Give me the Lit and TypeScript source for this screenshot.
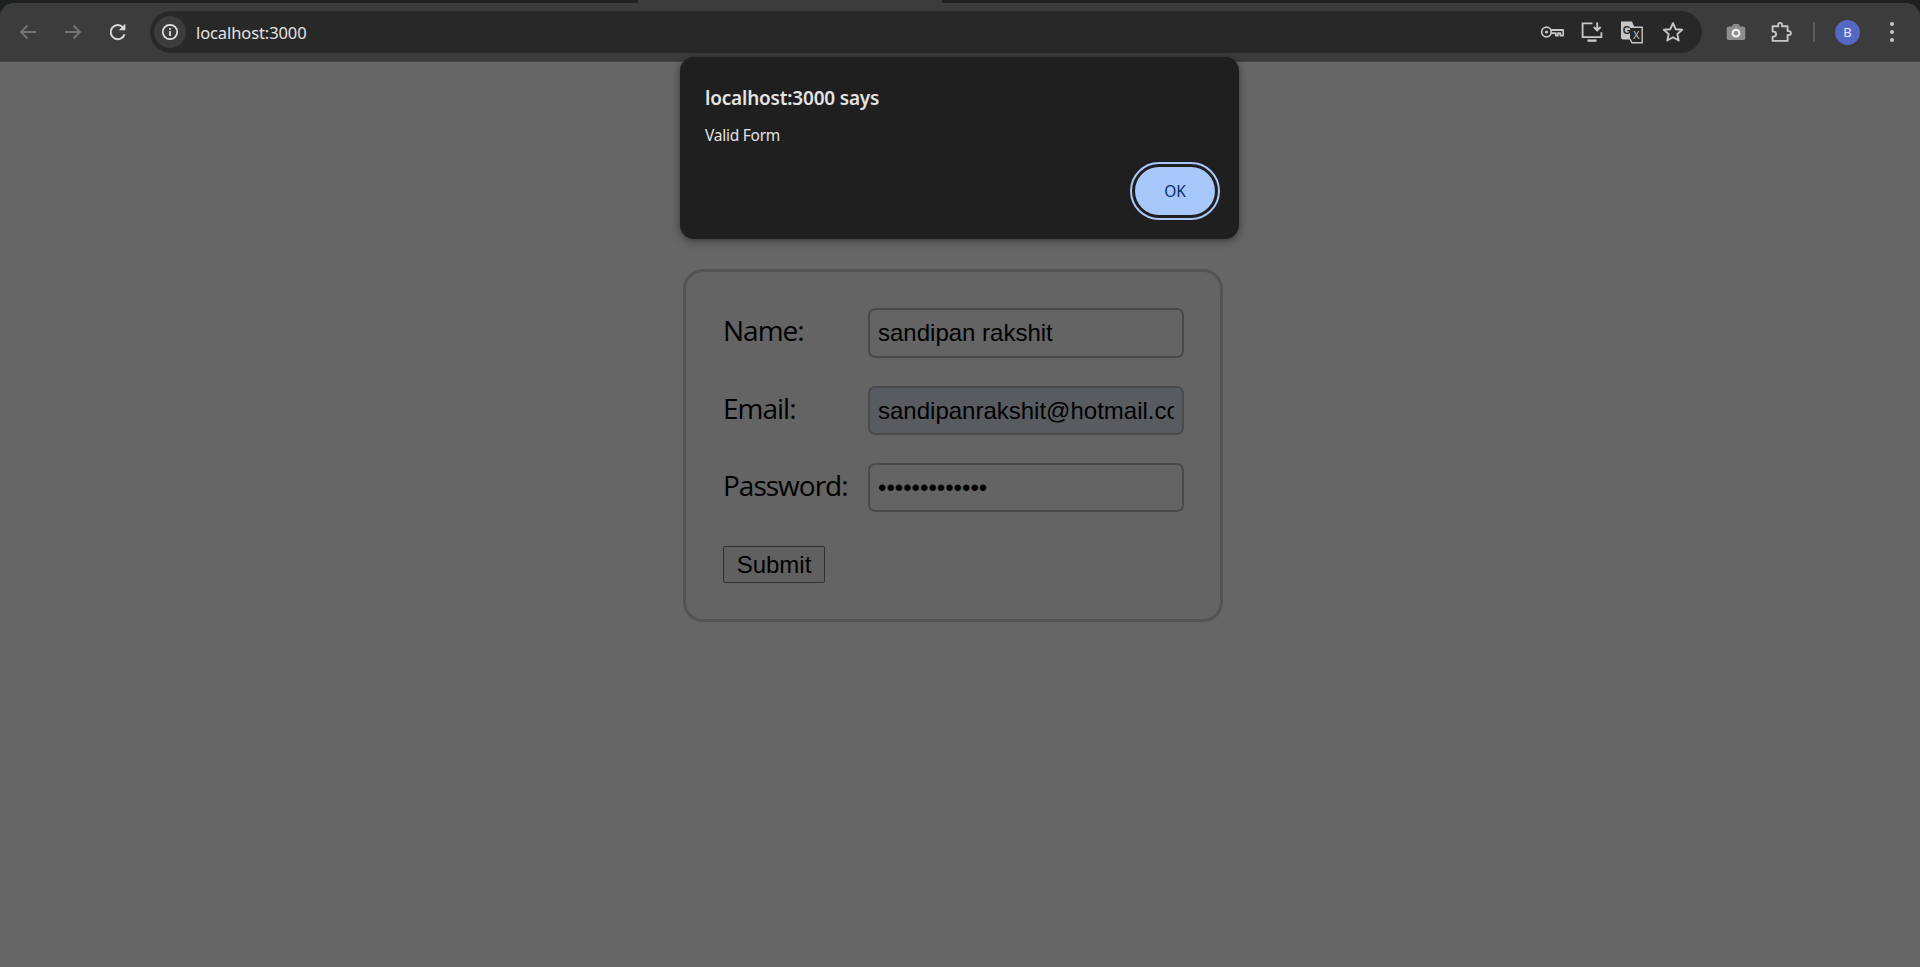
import { LitElement, html, css, svg } from 'lit'
import { customElement, state } from 'lit/decorators.js'

const arrowBack = svg`<path d="M20 12H5M11.5 5.5 5 12l6.5 6.5" fill="none" stroke="currentColor" stroke-width="1.8"/>`
const arrowForward = svg`<path d="M4 12h15M12.5 5.5 19 12l-6.5 6.5" fill="none" stroke="currentColor" stroke-width="1.8"/>`
const reload = svg`<path d="M18.6 14.2A7.1 7.1 0 1 1 17 7.3" fill="none" stroke="currentColor" stroke-width="1.9"/><path d="M19.4 3.6v6.6h-6.6z" fill="currentColor"/>`
const info = svg`<circle cx="12" cy="12" r="7.2" fill="none" stroke="currentColor" stroke-width="1.7"/><path d="M11.1 11h1.8v5h-1.8zM11.1 8h1.8v1.8h-1.8z" fill="currentColor"/>`
const key = svg`<circle cx="6.5" cy="12" r="4.8" fill="none" stroke="currentColor" stroke-width="1.8"/><circle cx="6.5" cy="12" r="1.6" fill="currentColor"/><path d="M11.2 10h12v5.6h-2.8v-2.4H18v2.4h-2.2v-2.4h-4.6" fill="none" stroke="currentColor" stroke-width="1.8" stroke-linejoin="round"/>`
const install = svg`<path d="M12.5 3.4H2.6v13.8h18.8v-5" fill="none" stroke="currentColor" stroke-width="1.8"/><path d="M7.5 20.6h9" stroke="currentColor" stroke-width="2.4"/><path d="M17.2 2.4v7.4M13.8 7l3.4 3.4L20.6 7" fill="none" stroke="currentColor" stroke-width="1.9"/>`
const translate = svg`<path d="M1 1.5h11l2.4 5.5v12.5H3a2 2 0 0 1-2-2z" fill="currentColor"/><path d="M10 7.2h12.2v15.6H12L10 19" fill="#282828" stroke="currentColor" stroke-width="1.4"/><text x="2.8" y="14.2" font-family="Liberation Sans, sans-serif" font-size="10.5" font-weight="700" fill="#282828">G</text><text x="13" y="18.5" font-family="Liberation Sans, sans-serif" font-size="10" fill="currentColor">X</text>`
const star = svg`<path d="m12 3.2 2.7 6 6.5.6-4.9 4.3 1.4 6.4-5.7-3.3-5.7 3.3 1.4-6.4-4.9-4.3 6.5-.6z" fill="none" stroke="currentColor" stroke-width="1.9" stroke-linejoin="round"/>`
const camera = svg`<path d="M4.5 6.5H8L9.4 3.9h5.2L16 6.5h3.5a1.8 1.8 0 0 1 1.8 1.8v10a1.8 1.8 0 0 1-1.8 1.8h-15a1.8 1.8 0 0 1-1.8-1.8v-10a1.8 1.8 0 0 1 1.8-1.8z" fill="#8e8e8e"/><circle cx="12" cy="13.2" r="3.4" fill="none" stroke="#f2f2f2" stroke-width="2"/>`
const puzzle = svg`<path d="M3.6 6.2h5.6V4.8a1.9 1.9 0 0 1 3.8 0v1.4h5.6v4.9H20a1.9 1.9 0 0 1 0 3.8h-1.4v6H3.6v-4.3h1a2.5 2.5 0 0 0 0-5h-1z" fill="none" stroke="currentColor" stroke-width="1.9" stroke-linejoin="round"/>`

const icon = (body: unknown, size = 24) => html`
  <svg width=${size} height=${size} viewBox="0 0 24 24" aria-hidden="true">${body}</svg>
`

@customElement('app-root')
export class AppRoot extends LitElement {
  static styles = css`
    :host {
      display: block;
      position: relative;
      height: 100vh;
      overflow: hidden;
      background: #fff;
      font-family: "Liberation Sans", Arial, sans-serif;
    }

    /* browser chrome */
    .chrome {
      background: #1f2120;
    }

    .tabstrip {
      height: 3px;
      display: flex;
    }

    .active-tab {
      margin-left: 638px;
      width: 304px;
      background: #3c3c3c;
    }

    .toolbar {
      height: 59px;
      box-sizing: border-box;
      padding: 8px 0 8px 5px;
      display: flex;
      align-items: flex-start;
      background: #3c3c3c;
      border-bottom: 1px solid #464646;
      border-radius: 14px 14px 0 0;
    }

    .nav {
      width: 45px;
      height: 42px;
      display: flex;
      align-items: center;
      justify-content: center;
      color: #d9d9d9;
    }

    .nav.off {
      color: #757575;
    }

    .omnibox {
      flex: 1;
      height: 42px;
      margin-left: 10px;
      display: flex;
      align-items: center;
      background: #282828;
      border-radius: 21px;
      padding-right: 9px;
      color: #c7c7c7;
    }

    .chip {
      width: 32px;
      height: 32px;
      margin-left: 4px;
      border-radius: 50%;
      background: #3c3c3c;
      color: #e3e3e3;
      display: flex;
      align-items: center;
      justify-content: center;
    }

    .url {
      flex: 1;
      margin-left: 10px;
      font: 400 16.5px "Noto Sans", "Open Sans", sans-serif;
      letter-spacing: -0.1px;
      color: #e3e3e3;
    }

    .omni-icon {
      width: 40.5px;
      display: flex;
      justify-content: center;
    }

    .omni-icon.key {
      padding-left: 1px;
      width: 39.5px;
    }

    .actions {
      width: 218px;
      height: 42px;
      display: flex;
      align-items: center;
      color: #c7c7c7;
    }

    .camera {
      margin-left: 22px;
      display: flex;
    }

    .puzzle {
      margin-left: 21px;
      display: flex;
    }

    .sep {
      width: 2px;
      height: 20px;
      margin-left: 20px;
      background: #5a5a5a;
    }

    .avatar {
      width: 25px;
      height: 25px;
      margin-left: 20px;
      border-radius: 50%;
      background: #5468c4;
      color: #e8eaf6;
      font: 400 13px "Noto Sans", sans-serif;
      display: flex;
      align-items: center;
      justify-content: center;
    }

    .dots {
      margin-left: 30px;
      display: flex;
      flex-direction: column;
      gap: 4px;
    }

    .dots i {
      width: 4px;
      height: 4px;
      border-radius: 50%;
      background: #c7c7c7;
    }

    /* page, dimmed by the alert */
    .page {
      position: relative;
      height: 905px;
      box-sizing: border-box;
      padding: 207px 0 0 683px;
    }

    .scrim {
      position: absolute;
      inset: 0;
      background: rgba(0, 0, 0, 0.6);
    }

    .card {
      width: 540px;
      height: 353px;
      box-sizing: border-box;
      padding: 36px 36px 36px 37px;
      border: 3px solid #d0d0d0;
      border-radius: 20px;
      background: #f9f9f9;
    }

    .fields {
      display: grid;
      grid-template-columns: 145px 316px;
      grid-template-rows: 50px 49px 49px;
      row-gap: 28px;
    }

    label {
      font: 400 28px "Open Sans", "Noto Sans", sans-serif;
      letter-spacing: -1px;
      line-height: 44px;
      color: #000;
    }

    input {
      box-sizing: border-box;
      width: 316px;
      height: 100%;
      padding: 0 8px;
      border: 2px solid #b8b8b8;
      border-radius: 7px;
      background: transparent;
      font: 400 24px "Liberation Sans", Arial, sans-serif;
      color: #000;
      outline: none;
    }

    input.filled {
      background: #dde3f0;
    }

    button.submit {
      display: block;
      width: 102px;
      height: 37px;
      margin-top: 34px;
      padding: 0;
      border: 1px solid #767676;
      border-radius: 2px;
      background: #efefef;
      font: 400 24px "Liberation Sans", Arial, sans-serif;
      color: #000;
    }

    /* alert dialog */
    .alert {
      position: absolute;
      left: 680px;
      top: 57px;
      width: 559px;
      height: 182px;
      box-sizing: border-box;
      padding: 29px 24px 0 25px;
      border-radius: 14px;
      background: #1f1f1f;
      box-shadow: 0 2px 8px rgba(0, 0, 0, 0.45);
      color: #e3e3e3;
      font-family: "Noto Sans", "Open Sans", sans-serif;
    }

    .alert h1 {
      margin: 0;
      font-size: 19px;
      font-weight: 600;
      line-height: 24px;
      letter-spacing: -0.2px;
    }

    .alert p {
      margin: 15px 0 0;
      font-size: 15.5px;
      line-height: 20px;
      letter-spacing: -0.25px;
    }

    .alert-actions {
      display: flex;
      justify-content: flex-end;
      margin-top: 22px;
    }

    .ok {
      width: 80px;
      height: 48px;
      padding: 0;
      border: none;
      border-radius: 24px;
      background: #a8c7fa;
      color: #062e6f;
      font: 400 15.5px "Noto Sans", sans-serif;
      outline: 2px solid #a8c7fa;
      outline-offset: 3px;
    }
  `

  @state() private name = 'sandipan rakshit'
  @state() private email = 'sandipanrakshit@hotmail.com'
  @state() private password = 'sandipan12345'

  render() {
    return html`
      <div class="chrome">
        <div class="tabstrip"><div class="active-tab"></div></div>
        <div class="toolbar">
          <div class="nav off">${icon(arrowBack)}</div>
          <div class="nav off">${icon(arrowForward)}</div>
          <div class="nav">${icon(reload)}</div>
          <div class="omnibox">
            <div class="chip">${icon(info)}</div>
            <div class="url">localhost:3000</div>
            <div class="omni-icon key">${icon(key)}</div>
            <div class="omni-icon">${icon(install)}</div>
            <div class="omni-icon">${icon(translate)}</div>
            <div class="omni-icon">${icon(star)}</div>
          </div>
          <div class="actions">
            <div class="camera">${icon(camera)}</div>
            <div class="puzzle">${icon(puzzle)}</div>
            <div class="sep"></div>
            <div class="avatar">B</div>
            <div class="dots"><i></i><i></i><i></i></div>
          </div>
        </div>
      </div>

      <div class="page">
        <form class="card">
          <div class="fields">
            <label>Name:</label>
            <input type="text" .value=${this.name} />
            <label>Email:</label>
            <input class="filled" type="email" .value=${this.email} />
            <label>Password:</label>
            <input type="password" .value=${this.password} />
          </div>
          <button class="submit" type="button">Submit</button>
        </form>
        <div class="scrim"></div>
      </div>

      <div class="alert" role="alertdialog">
        <h1>localhost:3000 says</h1>
        <p>Valid Form</p>
        <div class="alert-actions">
          <button class="ok" type="button">OK</button>
        </div>
      </div>
    `
  }
}
